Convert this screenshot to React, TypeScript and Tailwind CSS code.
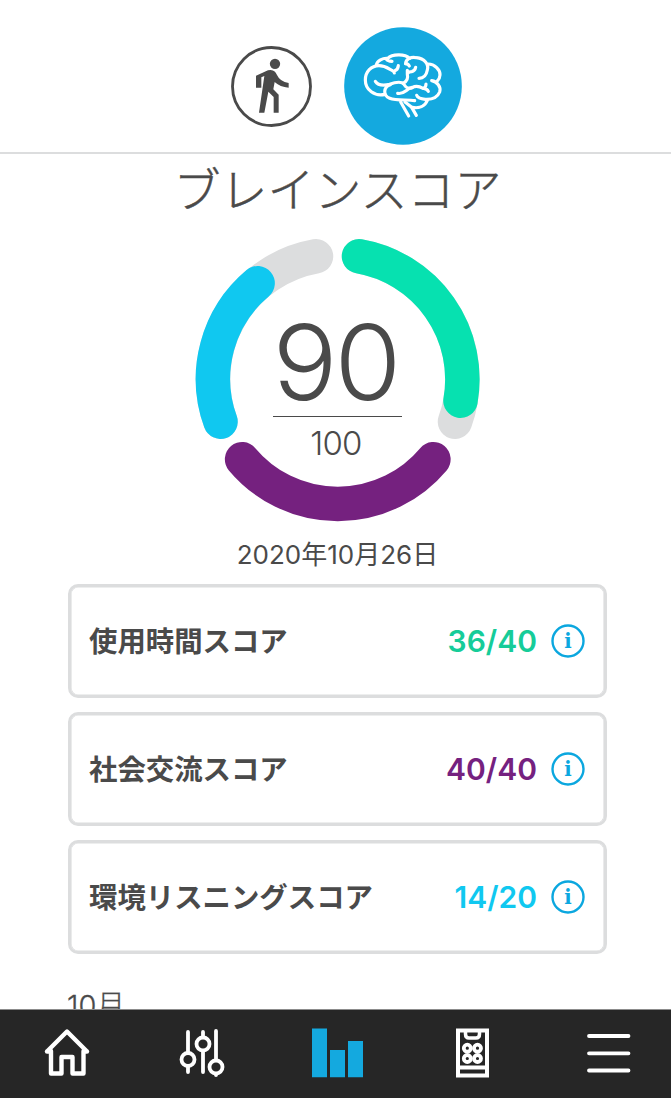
import React from "react";

const sans = "font-['Inter','Noto_Sans_CJK_JP',sans-serif]";

function WalkIcon() {
  return (
    <svg className="h-[81px] w-[81px] shrink-0" viewBox="34 76 243 243" fill="none">
      <circle cx="155.500" cy="197.500" r="117" stroke="#4a4a4a" strokeWidth="8.500" />
      <g fill="#4a4a4a">
        <circle cx="166" cy="129.500" r="15.500" />
        <path d="M109 165L145 149Q157 145 166 153Q169 157 172 163Q181 183 207 187V201Q181 199 165 184L161 206L177 222V276H162V229L146 213L134 276H118L134 166L125 170V201H109Z" />
      </g>
    </svg>
  );
}

function BrainIcon() {
  return (
    <svg className="h-[118px] w-[118px] shrink-0" viewBox="28 21 354 354" fill="none">
      <circle cx="205" cy="198" r="176.500" fill="#14a9df" />
      <g transform="translate(75 75)" stroke="#fff" strokeWidth="9.500" strokeLinecap="round" strokeLinejoin="round">
        <path d="M76 148C45 155 17 135 17 105C17 80 35 62 58 62C78 62 88 72 97 76C102 79 104 81 104 84M116 62Q115 75 104 78" />
        <path d="M50 60C52 48 70 38 84 40C97 27 135 25 150 40M80 42Q84 48 97 49" />
        <path d="M138 56C138 42 155 34 170 38C195 40 208 58 203 75C200 92 192 100 178 100" />
        <path d="M138 56Q145 56 149 63M168 67Q166 78 156 80Q147 80 144 85M143 76V88C146 100 140 110 130 115" />
        <path d="M206 57C225 57 242 75 241 90C241 98 237 104 232 109" />
        <path d="M216 107C232 110 245 125 240 141C233 158 215 164 197 163C184 162 174 160 171 151" />
        <path d="M47 109C55 122 72 122 90 118C105 112 115 110 127 113C136 116 134 127 145 129Q152 130 158 128" />
        <path d="M114 145C135 149 138 132 158 127C170 121 180 124 190 130Q199 129 199 117M192 130Q202 131 206 139" />
        <path d="M92 119C70 126 70 152 90 160C110 168 145 163 165 167" />
        <path d="M203 166C196 183 178 191 157 187" />
        <path d="M123 171L147 213M136 171L156 187L170 211" />
      </g>
    </svg>
  );
}

function ScoreRing() {
  return (
    <svg className="col-start-1 row-start-1 h-[284px] w-[286px]" viewBox="195 238 286 284" fill="none" strokeWidth="34.5" strokeLinecap="round">
      <path d="M359 256.300A124.800 124.800 0 0 1 455 421.700" stroke="#dcddde" />
      <path d="M359 256.300A124.800 124.800 0 0 1 460.500 400.700" stroke="#06e1b0" />
      <path d="M433.400 459.300A124.800 124.800 0 0 1 242.100 459.300" stroke="#75217f" />
      <path d="M220.500 421.700A124.800 124.800 0 0 1 316 256.300" stroke="#dcddde" />
      <path d="M220.500 421.700A124.800 124.800 0 0 1 257.600 283.300" stroke="#10c8f0" />
    </svg>
  );
}

function InfoIcon() {
  return (
    <svg className="h-[34px] w-[34px] shrink-0" viewBox="0 0 34 34">
      <circle cx="17" cy="17" r="15.500" fill="none" stroke="#0ba7df" strokeWidth="2.400" />
      <text x="17" y="24" textAnchor="middle" fill="#0ba7df" className="font-['DejaVu_Serif',serif] text-[19.5px] font-bold">i</text>
    </svg>
  );
}

function ScoreCard({ label, value, tone }: { label: string; value: string; tone: string }) {
  return (
    <div className="flex h-[114px] items-center rounded-[10px] border-[3px] border-[#dcddde] pb-px pl-[18px] pr-[19px] shadow-[inset_0_0_0_0.6px_#dcddde]">
      <span className="flex-1 pt-[3px] text-[28.4px] font-bold">{label}</span>
      <span className={`mr-[14px] pt-px text-[30px] font-semibold ${tone}`}>{value}</span>
      <InfoIcon />
    </div>
  );
}

export default function App() {
  return (
    <div lang="ja" className={`flex h-[1098px] w-[671px] flex-col overflow-hidden bg-white text-[#4a4a4a] ${sans}`}>
      <header className="flex h-[154px] shrink-0 items-center gap-[32px] border-b-2 border-[#dcddde] pl-[231px] pt-[20px]">
        <WalkIcon />
        <BrainIcon />
      </header>
      <main className="flex min-h-0 flex-1 flex-col overflow-hidden">
        <h1 className="ml-1 mt-[2px] h-[68px] text-center text-[47px] font-light leading-[68px] [-webkit-text-stroke:0.5px_#4a4a4a]">ブレインスコア</h1>
        <div className="ml-[195px] mt-[14px] grid h-[284px] w-[286px] shrink-0">
          <ScoreRing />
          <div className="col-start-1 row-start-1 flex flex-col items-center pr-px pt-[72px]">
            <span className="mr-[4px] h-[106px] scale-x-[1.04] text-[104px] font-light leading-[104px] tracking-[-3px]">90</span>
            <span className="h-px w-[129px] bg-[#4a4a4a]" />
            <span className="mr-[3px] mt-[6px] text-[33px] font-light leading-[40px] tracking-[-0.8px]">100</span>
          </div>
        </div>
        <p className="ml-1 mt-[13px] h-[40px] shrink-0 text-center text-[26px] leading-[40px]">2020年10月26日</p>
        <section className="ml-[68px] mt-[9px] flex w-[539px] shrink-0 flex-col gap-[14px]">
          <ScoreCard label="使用時間スコア" value="36/40" tone="text-[#16cc99]" />
          <ScoreCard label="社会交流スコア" value="40/40" tone="text-[#75217f]" />
          <ScoreCard label="環境リスニングスコア" value="14/20" tone="text-[#10c8f0]" />
        </section>
        <h2 className="ml-[67px] mt-[32px] shrink-0 text-[29px] font-light leading-[40px] [-webkit-text-stroke:0.3px_#4a4a4a]">10月</h2>
      </main>
      <nav className="flex h-[89px] shrink-0 border-t border-[#8c8c8c] bg-[#262626]">
        <svg className="h-[88px] w-[134px]" viewBox="0 1010 134 88" fill="none" stroke="#fff" strokeWidth="4.400" strokeLinejoin="round" strokeLinecap="round">
          <path d="M51 1051V1073.500H61.500V1057H72.500V1073.500H83.500V1051M47 1051.500L67 1031.500L87 1051.500M47 1051.500H51M83.500 1051.500H87" />
        </svg>
        <svg className="h-[88px] w-[134px]" viewBox="134 1010 134 88" fill="none" stroke="#fff" strokeWidth="3.800" strokeLinecap="round">
          <path d="M188 1032V1052M188 1066V1072M203 1032V1037M203 1051V1072M216 1031V1060M216 1074V1075" />
          <circle cx="188" cy="1059.500" r="6.500" />
          <circle cx="203" cy="1044" r="6.500" />
          <circle cx="216" cy="1067" r="6.500" />
        </svg>
        <svg className="h-[88px] w-[134px]" viewBox="268 1010 134 88" fill="#14a9df">
          <path d="M312 1028.500H327V1077.300H312ZM330 1050H345V1077.300H330ZM348 1041H363V1077.300H348Z" />
        </svg>
        <svg className="h-[88px] w-[134px]" viewBox="402 1010 134 88" fill="none" stroke="#fff">
          <path d="M458 1030.500H487V1075.500H458ZM458 1067.500H487" strokeWidth="4" />
          <path d="M465.500 1030V1034Q465.500 1038 469 1038H476Q479.500 1038 479.500 1034V1030" strokeWidth="3.500" />
          <g strokeWidth="3.800">
            <circle cx="467.300" cy="1048.200" r="3.500" />
            <circle cx="477.500" cy="1048.200" r="3.500" />
            <circle cx="467.300" cy="1058.500" r="3.500" />
            <circle cx="477.500" cy="1058.500" r="3.500" />
          </g>
        </svg>
        <svg className="h-[88px] w-[135px]" viewBox="536 1010 135 88" stroke="#fff" strokeWidth="3.800" strokeLinecap="round">
          <path d="M589 1036H628.500M589 1053.300H628.500M589 1070.500H628.500" />
        </svg>
      </nav>
    </div>
  );
}
